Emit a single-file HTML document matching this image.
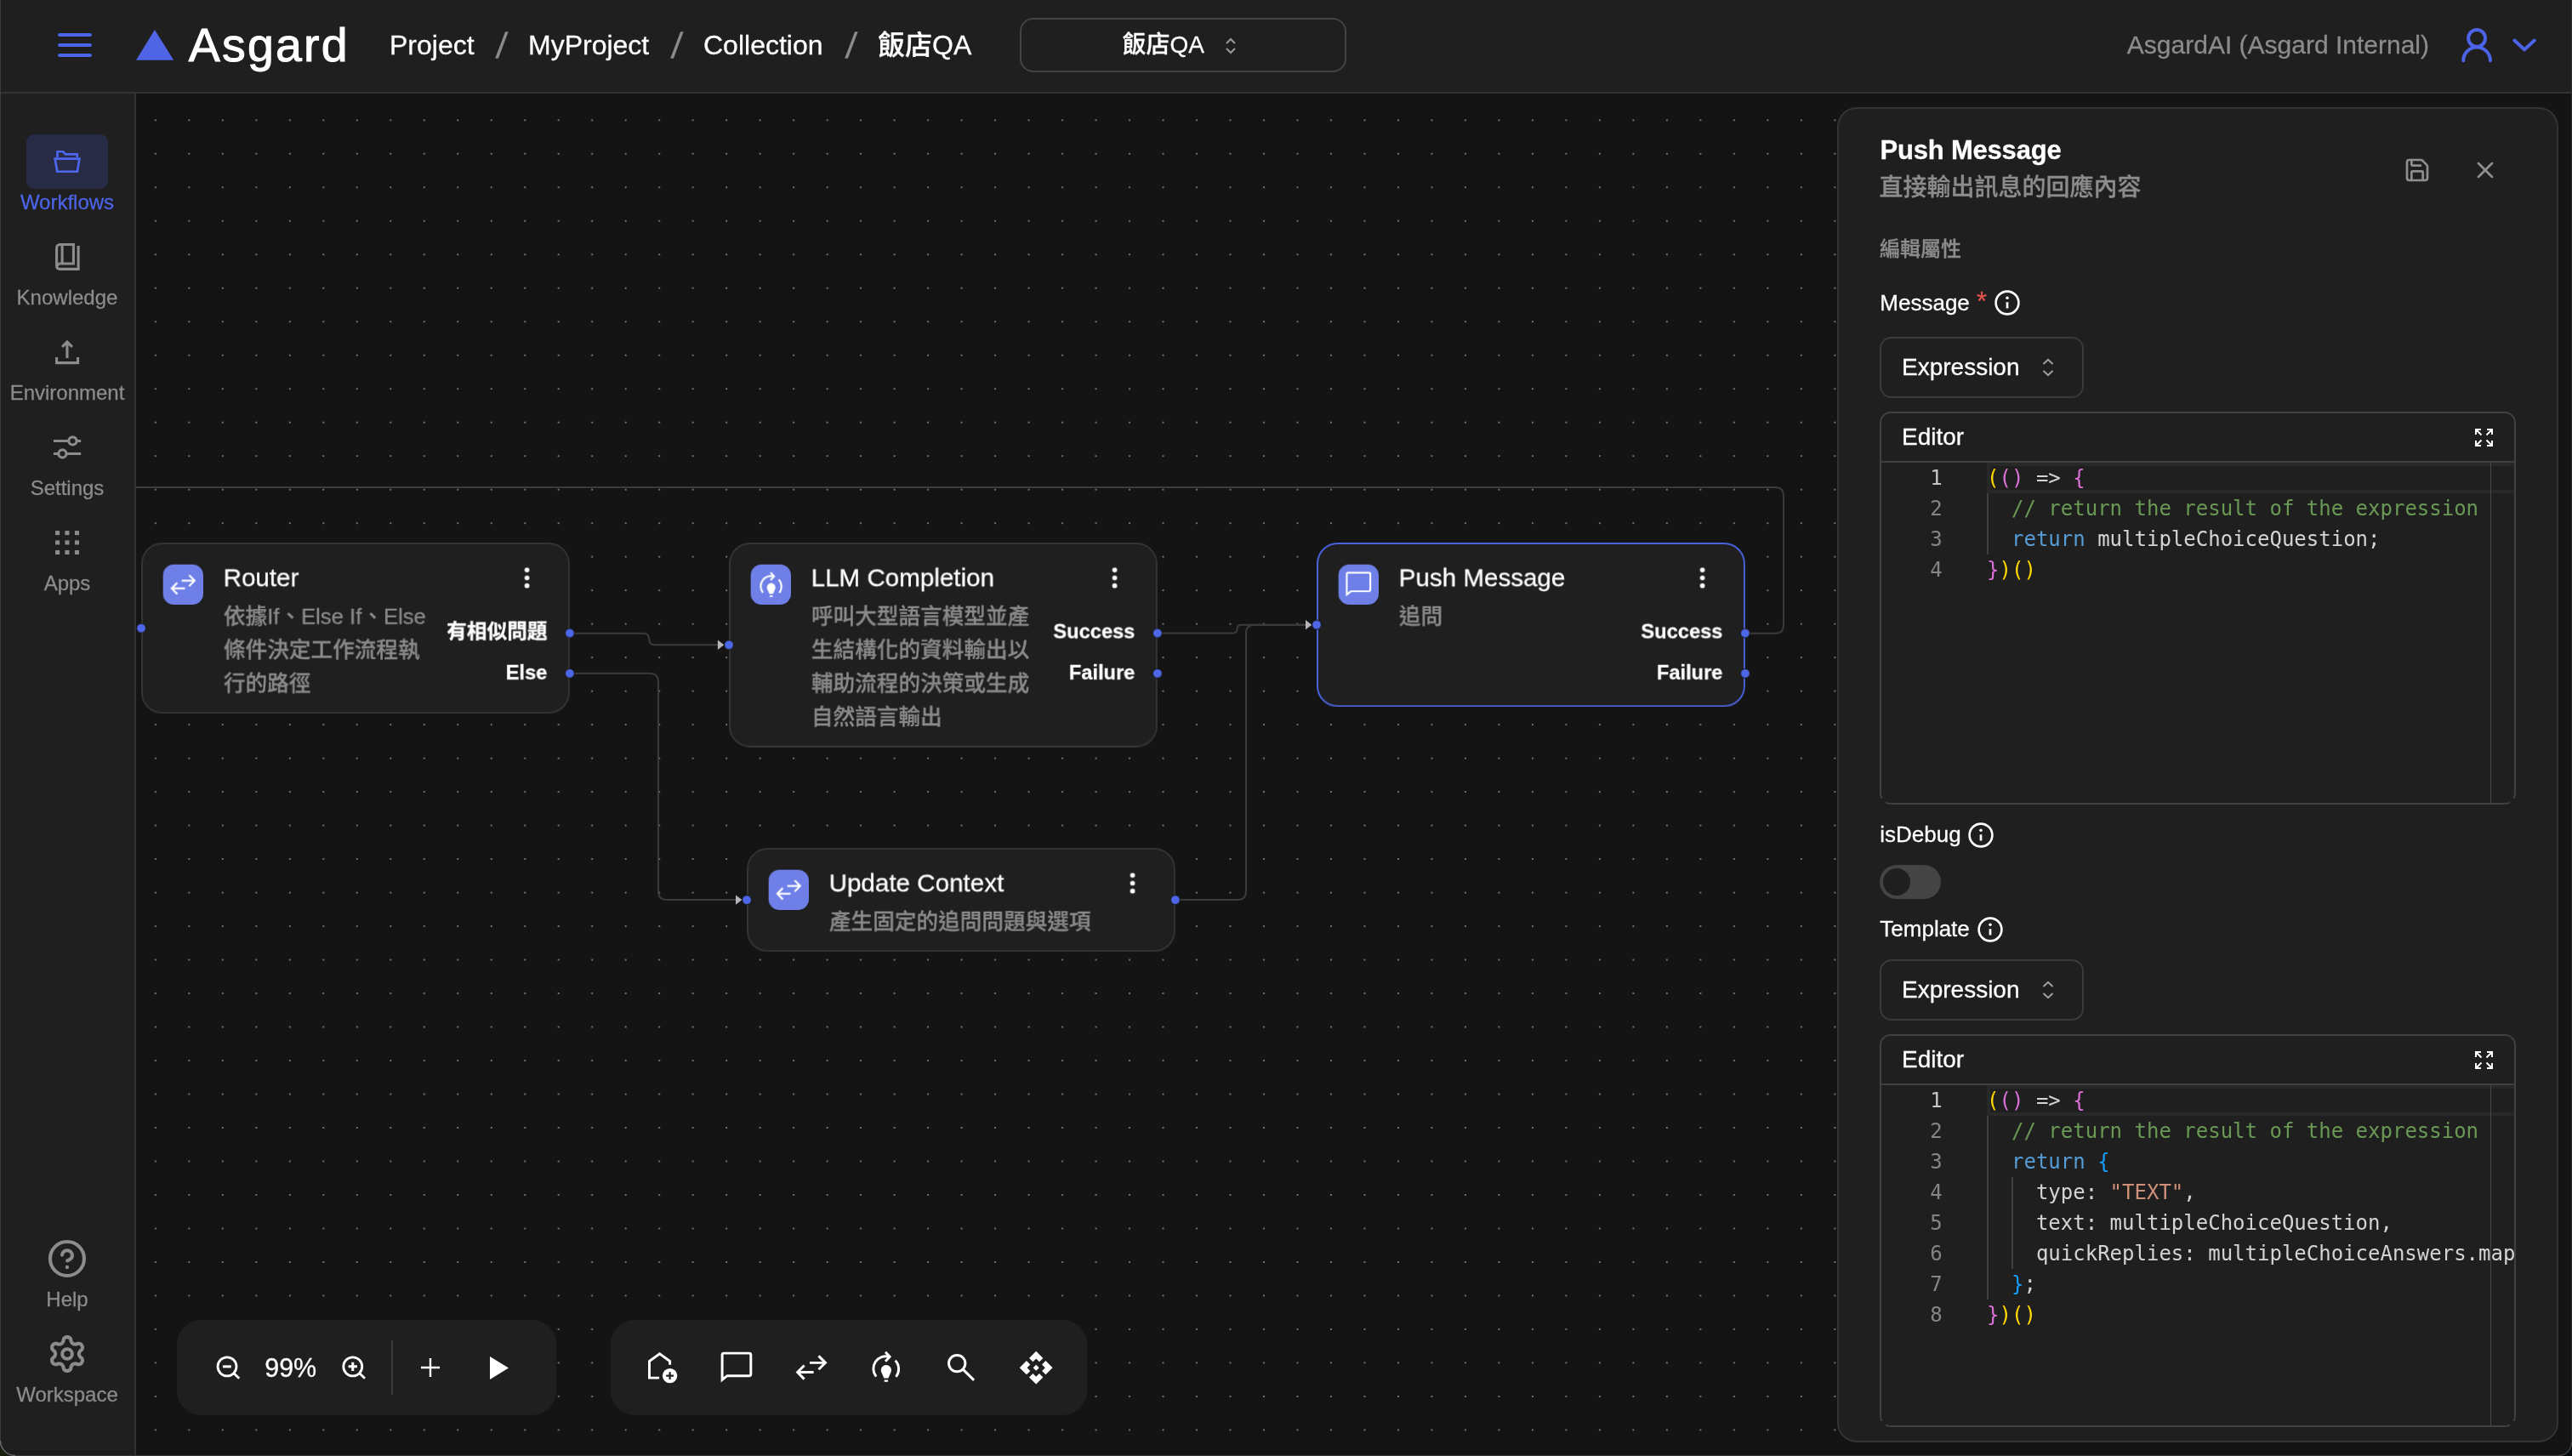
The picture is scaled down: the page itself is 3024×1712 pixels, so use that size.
<!DOCTYPE html>
<html lang="zh-Hant">
<head>
<meta charset="utf-8">
<title>Asgard - 飯店QA</title>
<style>
*{box-sizing:border-box;margin:0;padding:0}
html,body{width:3024px;height:1712px;background:#141414}
#root{position:absolute;left:0;top:0;width:3024px;height:1712px;overflow:hidden;background:#141414}
body{font-family:"Liberation Sans","Noto Sans CJK TC",sans-serif;color:#fff;position:relative;-webkit-font-smoothing:antialiased;-webkit-text-stroke-width:.28px}
.abs{position:absolute}
svg{display:block;overflow:visible}

/* ---------- header ---------- */
#header{will-change:transform;position:absolute;left:0;top:0;width:3024px;height:110px;background:#1f1f1f;border-bottom:2px solid #333;z-index:5}
#header .t{position:absolute;white-space:nowrap;font-size:32px;line-height:40px;top:33px;color:#fff;font-weight:500}
#header .sep{color:#8c8c8c;font-size:42px;top:33.65px;width:11.7px;transform:skewX(-6deg)}
#brand{position:absolute;left:221.8px;top:21.2px;font-size:55.5px;line-height:64px;letter-spacing:2.2px;color:#fff;white-space:nowrap;-webkit-text-stroke:1px #fff}
#projsel{position:absolute;left:1199px;top:21px;width:384px;height:64px;border:2px solid #444;border-radius:16px}
#org{position:absolute;right:168px;top:33px;font-size:30px;line-height:40px;color:#8c8c8c;white-space:nowrap}

/* ---------- sidebar ---------- */
#sidebar{will-change:transform;position:absolute;left:0;top:110px;width:160px;height:1602px;background:#1f1f1f;border-right:2px solid #333;z-index:4}
.nav{position:absolute;left:0;width:158px;height:96px;text-align:center;color:#8c8c8c}
.nav .ib{position:absolute;left:31px;top:0;width:96px;height:64px;border-radius:9px}
.nav .lb{position:absolute;left:-20px;width:198px;top:64px;font-size:24px;line-height:32px;text-align:center;white-space:nowrap}
.nav.on{color:#4c64e8}
.nav.on .ib{background:#272b45}
.nav svg{position:absolute}

/* ---------- canvas ---------- */
#canvas{position:absolute;left:160px;top:110px;width:2864px;height:1602px;background-color:#141414;overflow:hidden}
#edges{position:absolute;left:-160px;top:-110px;width:3024px;height:1712px}
.node{will-change:transform;position:absolute;width:510.5px;background:#1f1f1f;border:2px solid #343434;border-radius:25px;transform:scale(.986);transform-origin:0 0}
.node.sel{border-color:#4a62dc;border-width:2.4px}
.node .ic{position:absolute;left:24px;top:24px;width:48px;height:48px;border-radius:13px;background:#6e80e8}
.node .tt{position:absolute;left:96px;top:19.6px;font-size:30px;line-height:40px;white-space:nowrap;color:#fff}
.node .ds{position:absolute;left:96.3px;top:65.6px;font-size:26px;line-height:40px;color:#8a8a8a;font-weight:500}
.node .ol{position:absolute;right:24.3px;font-size:24px;line-height:32px;font-weight:700;white-space:nowrap;color:#fff}
.node .kb{position:absolute;right:45.6px;top:25.8px;width:6px;height:28px}
.hd{position:absolute;width:12px;height:12px;border-radius:50%;background:#4d67e8;border:1.8px solid #171717}

.tool{will-change:transform;position:absolute;top:1442px;height:112px;background:#1f1f1f;border-radius:28px}

/* ---------- panel ---------- */
#panel{will-change:transform;position:absolute;left:2160px;top:126px;width:848px;height:1570px;background:#1f1f1f;border:2px solid #333;border-radius:23px;z-index:3}
#panel .h1{position:absolute;left:48.5px;top:28.5px;font-size:31px;line-height:40px;font-weight:700;white-space:nowrap;letter-spacing:-.2px}
#panel .h2{position:absolute;left:47.6px;top:73.2px;font-size:28px;line-height:40px;color:#8c8c8c;white-space:nowrap;font-weight:500}
#panel .sec{position:absolute;left:48px;font-size:24px;line-height:32px;color:#8c8c8c;white-space:nowrap}
#panel .lab{position:absolute;left:48.3px;font-size:26px;line-height:32px;color:#fff;white-space:nowrap}
.sel2{position:absolute;left:48px;width:240px;height:72px;border:2px solid #3a3a3a;border-radius:14px}
.sel2 span{position:absolute;left:24px;top:14px;font-size:28px;line-height:40px}
.ed{position:absolute;left:48px;width:748px;height:462px;border:2px solid #404040;border-radius:13px}
.ed .cv{position:absolute;bottom:-2px;width:7px;height:7px;background:#1f1f1f}
.ed .eh{position:absolute;left:0;top:0;width:100%;height:58px;border-bottom:2px solid #404040}
.ed .eh span{position:absolute;left:24px;top:8px;font-size:28px;line-height:40px}
.ed .code{-webkit-text-stroke-width:0;overflow:hidden;position:absolute;left:0;top:58px;width:100%;height:400px;font-family:"DejaVu Sans Mono","Liberation Mono",monospace;font-size:24px;line-height:36px;color:#d4d4d4}
.ed .ln{position:absolute;left:0;width:71.7px;text-align:right;color:#858585;white-space:pre}
.ed .ln.cur{color:#c6c6c6}
.ed .cl{position:absolute;left:124.1px;white-space:pre}
.ed .ruler{position:absolute;left:716px;top:0;width:1px;height:400px;background:#484848}
.ed .curline{position:absolute;left:124px;right:-8px;top:0;height:36px;border:4px solid #282828}
.ed .guide{position:absolute;width:2px;background:#404040}
.cy{color:#ffd700}.cm{color:#da70d6}.cb{color:#179fff}.ck{color:#569cd6}.cc{color:#6a9955}.cs{color:#ce9178}
</style>
</head>
<body>
<div id="root">

<!-- ================= HEADER ================= -->
<div id="header">
  <svg class="abs" style="left:68px;top:39px" width="40" height="28" viewBox="0 0 40 28"><g stroke="#4c64e8" stroke-width="4" stroke-linecap="round"><path d="M2 2H38M2 14H38M2 26H38"/></g></svg>
  <svg class="abs" style="left:160px;top:35.2px" width="44.2" height="35.8" viewBox="0 0 44.2 35.8"><path d="M21.9 0L44.2 35.8H0Z" fill="#4f65e6"/></svg>
  <div id="brand">Asgard</div>
  <div class="t" style="left:458px">Project</div>
  <div class="t sep" style="left:584.25px">/</div>
  <div class="t" style="left:621px">MyProject</div>
  <div class="t sep" style="left:790.05px">/</div>
  <div class="t" style="left:827px">Collection</div>
  <div class="t sep" style="left:995.1px">/</div>
  <div class="t" style="left:1032px">飯店QA</div>
  <div id="projsel">
    <div class="t" style="left:118.4px;top:10.3px;font-size:28px">飯店QA</div>
    <svg class="abs" style="left:239px;top:20.5px" width="14" height="20" viewBox="0 0 14 20"><path d="M2 7L7 2L12 7M2 13L7 18L12 13" fill="none" stroke="#9a9a9a" stroke-width="2"/></svg>
  </div>
  <div id="org">AsgardAI (Asgard Internal)</div>
  <svg class="abs" style="left:2892px;top:31px" width="40" height="44" viewBox="0 0 40 44"><g fill="none" stroke="#4c64e8" stroke-width="4" stroke-linecap="round"><circle cx="20.1" cy="14" r="9.95"/><path d="M4.3 40.3A15.8 15.8 0 0 1 35.9 40.3"/></g></svg>
  <svg class="abs" style="left:2953px;top:44px" width="30" height="18" viewBox="0 0 30 18"><path d="M3.4 3.5L15.1 14.4L26.8 3.5" fill="none" stroke="#4c64e8" stroke-width="4" stroke-linecap="round" stroke-linejoin="round"/></svg>
</div>

<!-- ================= SIDEBAR ================= -->
<div id="sidebar">
  <div class="nav on" style="top:48px"><div class="ib"><svg class="abs" style="left:0;top:0" width="96" height="64" viewBox="0 0 96 64" fill="none" stroke="#4d67ec" stroke-width="2.7"><path d="M36.45 27V20.25H43.2L45.9 23.35H59.7V27"/><path d="M33.6 28.6H62.4L59.9 43.75H36.3Z"/></svg></div><div class="lb">Workflows</div></div>
  <div class="nav" style="top:160px"><div class="ib"><svg class="abs" style="left:0;top:0" width="96" height="64" viewBox="0 0 96 64" fill="none" stroke="#8c8c8c" stroke-width="3.1"><path d="M39.6 40H55.4V17.5H39.6A4 4 0 0 0 35.6 21.5V42.9A3.5 3.5 0 0 0 39.1 46.4H61.1V18.9"/><path d="M39.8 40A3.2 3.2 0 0 0 36.3 43.2"/><path d="M42.1 17.5V40"/></svg></div><div class="lb">Knowledge</div></div>
  <div class="nav" style="top:272px"><div class="ib"><svg class="abs" style="left:0;top:0" width="96" height="64" viewBox="0 0 96 64" fill="none" stroke="#8c8c8c" stroke-width="3.1"><path d="M35.6 38.05V44.6H60.56V38.05M47.95 20.3V38.9M42.1 25.9L47.95 20.05L53.85 25.9"/></svg></div><div class="lb">Environment</div></div>
  <div class="nav" style="top:384px"><div class="ib"><svg class="abs" style="left:0;top:0" width="96" height="64" viewBox="0 0 96 64" fill="none" stroke="#8c8c8c" stroke-width="3.1"><path d="M31.9 24.46H49.86M59.06 24.46H64.15M31.9 39.5H37.8M47 39.5H64.15"/><circle cx="54.46" cy="24.46" r="4.6"/><circle cx="42.4" cy="39.5" r="4.6"/></svg></div><div class="lb">Settings</div></div>
  <div class="nav" style="top:496px"><div class="ib"><svg class="abs" style="left:0;top:0" width="96" height="64" viewBox="0 0 96 64" fill="#8c8c8c"><rect x="34.07" y="18.07" width="5.05" height="5.05"/><rect x="45.4" y="18.07" width="5.05" height="5.05"/><rect x="56.94" y="18.07" width="5.05" height="5.05"/><rect x="34.07" y="29.4" width="5.05" height="5.05"/><rect x="45.4" y="29.4" width="5.05" height="5.05"/><rect x="56.94" y="29.4" width="5.05" height="5.05"/><rect x="34.07" y="40.94" width="5.05" height="5.05"/><rect x="45.4" y="40.94" width="5.05" height="5.05"/><rect x="56.94" y="40.94" width="5.05" height="5.05"/></svg></div><div class="lb">Apps</div></div>
  <div class="nav" style="top:1338px"><div class="ib"><svg class="abs" style="left:0;top:0" width="96" height="64" viewBox="0 0 96 64" fill="none" stroke="#8c8c8c" stroke-width="4.1" stroke-linecap="round"><circle cx="47.95" cy="32" r="20"/><path d="M41.95 27.6A6 6 0 1 1 53.15 31.2Q51.2 33.3 48.2 34.3"/><circle cx="47.95" cy="42" r="2.2" fill="#8c8c8c" stroke="none"/></svg></div><div class="lb">Help</div></div>
  <div class="nav" style="top:1450px"><div class="ib"><svg class="abs" style="left:0;top:0" width="96" height="64" viewBox="0 0 96 64" fill="none" stroke="#8c8c8c" stroke-width="4.1" stroke-linejoin="round"><path d="M61.85,32.00 L61.88,32.48 L61.98,32.98 L62.14,33.49 L62.36,34.02 L62.66,34.59 L63.06,35.20 L63.63,35.90 L65.00,36.88 L65.51,37.69 L65.77,38.47 L65.89,39.23 L65.89,39.97 L65.79,40.67 L65.58,41.35 L65.28,41.97 L64.88,42.55 L64.41,43.07 L63.85,43.51 L63.21,43.88 L62.49,44.16 L61.68,44.32 L60.72,44.29 L59.19,43.59 L58.30,43.44 L57.57,43.40 L56.93,43.43 L56.35,43.50 L55.83,43.62 L55.36,43.78 L54.92,43.99 L54.52,44.26 L54.14,44.59 L53.78,44.99 L53.43,45.45 L53.09,45.99 L52.76,46.64 L52.44,47.49 L52.28,49.16 L51.83,50.01 L51.28,50.62 L50.69,51.11 L50.05,51.48 L49.38,51.74 L48.69,51.90 L48.00,51.95 L47.31,51.90 L46.62,51.74 L45.95,51.48 L45.31,51.11 L44.72,50.62 L44.17,50.01 L43.72,49.16 L43.56,47.49 L43.24,46.64 L42.91,45.99 L42.57,45.45 L42.22,44.99 L41.86,44.59 L41.48,44.26 L41.08,43.99 L40.64,43.78 L40.17,43.62 L39.65,43.50 L39.07,43.43 L38.43,43.40 L37.70,43.44 L36.81,43.59 L35.28,44.29 L34.32,44.32 L33.51,44.16 L32.79,43.88 L32.15,43.51 L31.59,43.07 L31.12,42.55 L30.72,41.97 L30.42,41.35 L30.21,40.67 L30.11,39.97 L30.11,39.23 L30.23,38.47 L30.49,37.69 L31.00,36.88 L32.37,35.90 L32.94,35.20 L33.34,34.59 L33.64,34.02 L33.86,33.49 L34.02,32.98 L34.12,32.48 L34.15,32.00 L34.12,31.52 L34.02,31.02 L33.86,30.51 L33.64,29.98 L33.34,29.41 L32.94,28.80 L32.37,28.10 L31.00,27.12 L30.49,26.31 L30.23,25.53 L30.11,24.77 L30.11,24.03 L30.21,23.33 L30.42,22.65 L30.72,22.02 L31.12,21.45 L31.59,20.93 L32.15,20.49 L32.79,20.12 L33.51,19.84 L34.32,19.68 L35.28,19.71 L36.81,20.41 L37.70,20.56 L38.43,20.60 L39.07,20.57 L39.65,20.50 L40.17,20.38 L40.64,20.22 L41.07,20.01 L41.48,19.74 L41.86,19.41 L42.22,19.01 L42.57,18.55 L42.91,18.01 L43.24,17.36 L43.56,16.51 L43.72,14.84 L44.17,13.99 L44.72,13.38 L45.31,12.89 L45.95,12.52 L46.62,12.26 L47.31,12.10 L48.00,12.05 L48.69,12.10 L49.38,12.26 L50.05,12.52 L50.69,12.89 L51.28,13.38 L51.83,13.99 L52.28,14.84 L52.44,16.51 L52.76,17.36 L53.09,18.01 L53.43,18.55 L53.78,19.01 L54.14,19.41 L54.52,19.74 L54.92,20.01 L55.36,20.22 L55.83,20.38 L56.35,20.50 L56.93,20.57 L57.57,20.60 L58.30,20.56 L59.19,20.41 L60.72,19.71 L61.68,19.68 L62.49,19.84 L63.21,20.12 L63.85,20.49 L64.41,20.93 L64.88,21.45 L65.28,22.02 L65.58,22.65 L65.79,23.33 L65.89,24.03 L65.89,24.77 L65.77,25.53 L65.51,26.31 L65.00,27.12 L63.63,28.10 L63.06,28.80 L62.66,29.41 L62.36,29.98 L62.14,30.51 L61.98,31.02 L61.88,31.52Z"/><circle cx="48" cy="32" r="5.8"/></svg></div><div class="lb">Workspace</div></div>
</div>

<!-- ================= CANVAS ================= -->
<div id="canvas">

  <svg id="edges" viewBox="0 0 3024 1712" fill="none" stroke="#3b3b3b" stroke-width="2">
    <defs><pattern id="dots" x="163.095" y="121.555" width="39.49" height="39.49" patternUnits="userSpaceOnUse"><circle cx="19.745" cy="19.745" r="1.1" fill="#858585" stroke="none"/></pattern></defs>
    <rect x="160" y="110" width="2855" height="1602" fill="url(#dots)" stroke="none"/>
    <path d="M669.6 744.65H756.3Q763.1 744.65 763.1 751.45Q763.1 758.25 769.9 758.25H845"/>
    <path d="M669.6 791.85H763.95Q773.95 791.85 773.95 801.85V1048.1Q773.95 1058.1 783.95 1058.1H866"/>
    <path d="M1360.7 744.5H1449.5Q1454.5 744.5 1454.5 739.55Q1454.5 734.65 1459.5 734.65H1536"/>
    <path d="M1381.1 1057.9H1455Q1465 1057.9 1465 1047.9V744.65Q1465 734.65 1475 734.65H1536"/>
    <path d="M2051.6 744.65H2086.95Q2096.95 744.65 2096.95 734.65V582.9Q2096.95 572.9 2086.95 572.9H100"/>
    <g fill="#b4b4b9" stroke="none">
      <path d="M843.9 752.6L851.3 758.25L843.9 763.9Z"/>
      <path d="M865 1052.45L872.4 1058.1L865 1063.75Z"/>
      <path d="M1535 729L1542.4 734.65L1535 740.3Z"/>
    </g>
  </svg>

  <!-- Router -->
  <div class="node" style="left:6.3px;top:528.3px;height:204px">
    <div class="ic"><svg class="abs" style="left:0;top:0" width="48" height="48" viewBox="-24 -24 48 48" fill="none" stroke="#fff"><g transform="scale(.8333)" stroke-width="2.6"><path d="M-2 -5.65H15.8M8.5 -13.6L16.45 -5.65L8.5 2.3M2.6 5.55H-15.7M-8.4 -2.55L-16.35 5.55L-8.4 13.65"/></g></svg></div>
    <div class="tt">Router</div>
    <div class="ds" style="width:250px">依據If、Else If、Else條件決定工作流程執行的路徑</div>
    <svg class="kb" viewBox="0 0 6 28"><g fill="#fff"><circle cx="3" cy="4.6" r="2.85"/><circle cx="3" cy="14" r="2.85"/><circle cx="3" cy="23.4" r="2.85"/></g></svg>
    <div class="ol" style="top:88.2px">有相似問題</div>
    <div class="ol" style="top:136.8px">Else</div>
    <div class="hd" style="left:-8px;top:94px"></div>
    <div class="hd" style="right:-8px;top:100px"></div>
    <div class="hd" style="right:-8px;top:148px"></div>
  </div>

  <!-- LLM Completion -->
  <div class="node" style="left:697.4px;top:528.3px;height:244px">
    <div class="ic"><svg class="abs" style="left:0;top:0" width="48" height="48" viewBox="-24 -24 48 48" fill="none" stroke="#fff"><g transform="translate(.5 .9) scale(.8333)" stroke-width="2.6"><path d="M-11.84 10.65A14.7 14.7 0 0 1 3.6 -12.75M-1 -18.3L4.1 -12.8L-1 -7.3M10.65 -8.23A14.7 14.7 0 0 1 11.48 10.85"/><path d="M-0.1 -3.04a6.1 6.1 0 0 1 5.5 8.75L2.4 12.4H-2.6L-5.6 5.7a6.1 6.1 0 0 1 5.5 -8.74ZM-2.3 14.6H2.1V16.7H-2.3Z" fill="#fff" stroke="none"/></g></svg></div>
    <div class="tt">LLM Completion</div>
    <div class="ds" style="width:266px">呼叫大型語言模型並產生結構化的資料輸出以輔助流程的決策或生成自然語言輸出</div>
    <svg class="kb" viewBox="0 0 6 28"><g fill="#fff"><circle cx="3" cy="4.6" r="2.85"/><circle cx="3" cy="14" r="2.85"/><circle cx="3" cy="23.4" r="2.85"/></g></svg>
    <div class="ol" style="top:88.2px">Success</div>
    <div class="ol" style="top:136.8px">Failure</div>
    <div class="hd" style="left:-8px;top:114px"></div>
    <div class="hd" style="right:-8px;top:100px"></div>
    <div class="hd" style="right:-8px;top:148px"></div>
  </div>

  <!-- Push Message -->
  <div class="node sel" style="left:1387.7px;top:528.3px;height:196px">
    <div class="ic"><svg class="abs" style="left:0;top:0" width="48" height="48" viewBox="-24 -24 48 48" fill="none" stroke="#fff"><g transform="scale(.8333)" stroke-width="2.6"><path d="M-16.9 14.4V-14.9a2 2 0 0 1 2-2H14.8a2 2 0 0 1 2 2V7.65a2 2 0 0 1-2 2H-11Z"/></g></svg></div>
    <div class="tt">Push Message</div>
    <div class="ds" style="width:240px">追問</div>
    <svg class="kb" viewBox="0 0 6 28"><g fill="#fff"><circle cx="3" cy="4.6" r="2.85"/><circle cx="3" cy="14" r="2.85"/><circle cx="3" cy="23.4" r="2.85"/></g></svg>
    <div class="ol" style="top:88.2px">Success</div>
    <div class="ol" style="top:136.8px">Failure</div>
    <div class="hd" style="left:-8px;top:90px"></div>
    <div class="hd" style="right:-8px;top:100px"></div>
    <div class="hd" style="right:-8px;top:148px"></div>
  </div>

  <!-- Update Context -->
  <div class="node" style="left:718.3px;top:887px;height:124px">
    <div class="ic"><svg class="abs" style="left:0;top:0" width="48" height="48" viewBox="-24 -24 48 48" fill="none" stroke="#fff"><g transform="scale(.8333)" stroke-width="2.6"><path d="M-2 -5.65H15.8M8.5 -13.6L16.45 -5.65L8.5 2.3M2.6 5.55H-15.7M-8.4 -2.55L-16.35 5.55L-8.4 13.65"/></g></svg></div>
    <div class="tt">Update Context</div>
    <div class="ds" style="width:340px;white-space:nowrap">產生固定的追問問題與選項</div>
    <svg class="kb" viewBox="0 0 6 28"><g fill="#fff"><circle cx="3" cy="4.6" r="2.85"/><circle cx="3" cy="14" r="2.85"/><circle cx="3" cy="23.4" r="2.85"/></g></svg>
    <div class="hd" style="left:-8px;top:54px"></div>
    <div class="hd" style="right:-8px;top:54px"></div>
  </div>
  <div class="tool" style="left:48px;width:446px">
    <svg class="abs" style="left:46px;top:42px" width="30" height="30" viewBox="0 0 30 30" fill="none" stroke="#fff" stroke-width="2.8"><circle cx="13" cy="12.86" r="11"/><path d="M20.9 20.8L27.2 26.8"/><path d="M7.9 12.86H17.8" stroke-width="3"/></svg>
    <div class="abs" style="left:103.2px;top:35.9px;font-size:30.5px;line-height:40px;white-space:nowrap">99%</div>
    <svg class="abs" style="left:194px;top:42px" width="30" height="30" viewBox="0 0 30 30" fill="none" stroke="#fff" stroke-width="2.8"><circle cx="12.76" cy="12.86" r="11"/><path d="M20.66 20.8L26.96 26.8"/><path d="M7.6 12.86H17.9M12.76 7.7V18" stroke-width="3"/></svg>
    <div class="abs" style="left:252px;top:24px;width:2px;height:64px;background:#3a3a3a"></div>
    <svg class="abs" style="left:287px;top:45px" width="22" height="22" viewBox="0 0 22 22" fill="none" stroke="#fff" stroke-width="2.4"><path d="M11 0V22M0 11H22"/></svg>
    <svg class="abs" style="left:368px;top:43px" width="22" height="27" viewBox="0 0 22 27"><path d="M0 0L22 13.5L0 27Z" fill="#fff"/></svg>
  </div>
  <div class="tool" style="left:558px;width:560px">
    <svg class="abs" style="left:0;top:0" width="560" height="112" viewBox="0 0 560 112" fill="none" stroke="#fff" stroke-width="2.95">
      <g transform="translate(60 56)"><path d="M-2.9 12.1H-14.5V-7.5L-2.4 -16.2L9.6 -7.5V-3.2"/><circle cx="9.6" cy="9.6" r="8.7" fill="#fff" stroke="none"/><path d="M5.2 9.6H14M9.6 5.2V14" stroke="#1f1f1f" stroke-width="2.2"/></g>
      <g transform="translate(148 56)"><path d="M-16.9 14.4V-14.9a2 2 0 0 1 2-2H14.8a2 2 0 0 1 2 2V7.65a2 2 0 0 1-2 2H-11Z"/></g>
      <g transform="translate(236 56)"><path d="M-2 -5.65H15.8M8.5 -13.6L16.45 -5.65L8.5 2.3M2.6 5.55H-15.7M-8.4 -2.55L-16.35 5.55L-8.4 13.65"/></g>
      <g transform="translate(324 56)"><path d="M-11.84 10.65A14.7 14.7 0 0 1 3.6 -12.75M-1 -18.3L4.1 -12.8L-1 -7.3M10.65 -8.23A14.7 14.7 0 0 1 11.48 10.85"/><path d="M-0.1 -3.04a6.1 6.1 0 0 1 5.5 8.75L2.4 12.4H-2.6L-5.6 5.7a6.1 6.1 0 0 1 5.5 -8.74ZM-2.3 14.6H2.1V16.7H-2.3Z" fill="#fff" stroke="none"/></g>
      <g transform="translate(412 56)"><circle cx="-4.8" cy="-4.9" r="9.7"/><path d="M2.2 2.1L15.1 14.9"/></g>
    </svg>
    <svg class="abs" style="left:478.8px;top:34.87px" width="42.4" height="42.4" viewBox="0 0 24 24" fill="#fff"><path d="M14 12l-2 2-2-2 2-2 2 2zm-2-6l2.12 2.12 2.5-2.5L12 1 7.38 5.62l2.5 2.5L12 6zm-6 6l2.12-2.12-2.5-2.5L1 12l4.62 4.62 2.5-2.5L6 12zm12 0l-2.12 2.12 2.5 2.5L23 12l-4.62-4.62-2.5 2.5L18 12zm-6 6l-2.12-2.12-2.5 2.5L12 23l4.62-4.62-2.5-2.5L12 18z"/></svg>
  </div>
</div>

<!-- ================= PANEL ================= -->
<div id="panel">
  <div class="h1">Push Message</div>
  <div class="h2">直接輸出訊息的回應內容</div>
  <svg class="abs" style="left:663.5px;top:55.8px" width="32" height="32" viewBox="0 0 24 24" fill="none" stroke="#8f8f8f" stroke-width="2" stroke-linecap="round" stroke-linejoin="round"><path d="M15.2 3a2 2 0 0 1 1.4.6l3.8 3.8a2 2 0 0 1 .6 1.4V19a2 2 0 0 1-2 2H5a2 2 0 0 1-2-2V5a2 2 0 0 1 2-2z"/><path d="M17 21v-7a1 1 0 0 0-1-1H8a1 1 0 0 0-1 1v7"/><path d="M7 3v4a1 1 0 0 0 1 1h7"/></svg>
  <svg class="abs" style="left:744.4px;top:56px" width="32" height="32" viewBox="0 0 24 24" fill="none" stroke="#8f8f8f" stroke-width="2" stroke-linecap="round" stroke-linejoin="round"><path d="M18 6 6 18"/><path d="m6 6 12 12"/></svg>
  <div class="sec" style="top:148.6px;font-weight:500">編輯屬性</div>
  <div class="lab" style="top:211.7px">Message <span style="color:#e5534f;font-size:31px;line-height:0;position:relative;top:.4px;left:1px">*</span></div>
  <svg class="abs" style="left:183px;top:213px" width="30" height="30" viewBox="0 0 30 30"><circle cx="15" cy="15" r="13.4" fill="none" stroke="#fff" stroke-width="2.6"/><rect x="13.65" y="14.3" width="2.7" height="7.2" fill="#fff"/><circle cx="15" cy="9.3" r="1.75" fill="#fff"/></svg>
  <div class="sel2" style="top:268px"><span>Expression</span><svg class="abs" style="left:189px;top:23.2px" width="14" height="22" viewBox="0 0 14 22"><path d="M1.5 7L7 1.8L12.5 7M1.5 15L7 20.2L12.5 15" fill="none" stroke="#a0a0a0" stroke-width="2"/></svg></div>
  <div class="ed" style="top:356px">
    <div class="eh"><span>Editor</span><svg class="abs" style="left:698px;top:18px" width="21" height="21" viewBox="0 0 21 21" fill="none" stroke="#fff" stroke-width="2"><path d="M1 7V1H7M1.5 1.5L7.5 7.5M14 1H20V7M19.5 1.5L13.5 7.5M1 14V20H7M1.5 19.5L7.5 13.5M20 14V20H14M19.5 19.5L13.5 13.5"/></svg></div>
    <div class="code">
      <div class="curline"></div>
      <div class="guide" style="left:124px;top:36px;height:72px"></div>
      <div class="ln cur" style="top:0px">1</div><div class="cl" style="top:0px"><span class="cy">(</span><span class="cm">()</span> =&gt; <span class="cm">{</span></div>
      <div class="ln" style="top:36px">2</div><div class="cl" style="top:36px">  <span class="cc">// return the result of the expression</span></div>
      <div class="ln" style="top:72px">3</div><div class="cl" style="top:72px">  <span class="ck">return</span> multipleChoiceQuestion;</div>
      <div class="ln" style="top:108px">4</div><div class="cl" style="top:108px"><span class="cm">}</span><span class="cy">)()</span></div>
      <div class="ruler"></div>
    </div>
    <div class="cv" style="left:-2px"></div><div class="cv" style="right:-2px"></div>
  </div>

  <div class="lab" style="top:837px">isDebug</div>
  <svg class="abs" style="left:152px;top:839px" width="30" height="30" viewBox="0 0 30 30"><circle cx="15" cy="15" r="13.4" fill="none" stroke="#fff" stroke-width="2.6"/><rect x="13.65" y="14.3" width="2.7" height="7.2" fill="#fff"/><circle cx="15" cy="9.3" r="1.75" fill="#fff"/></svg>
  <div class="abs" style="left:48px;top:889px;width:72px;height:40px;border-radius:20px;background:#444"><div class="abs" style="left:4px;top:4px;width:32px;height:32px;border-radius:50%;background:#1f1f1f"></div></div>
  <div class="lab" style="top:948px">Template</div>
  <svg class="abs" style="left:163px;top:950px" width="30" height="30" viewBox="0 0 30 30"><circle cx="15" cy="15" r="13.4" fill="none" stroke="#fff" stroke-width="2.6"/><rect x="13.65" y="14.3" width="2.7" height="7.2" fill="#fff"/><circle cx="15" cy="9.3" r="1.75" fill="#fff"/></svg>
  <div class="sel2" style="top:1000px"><span>Expression</span><svg class="abs" style="left:189px;top:23.2px" width="14" height="22" viewBox="0 0 14 22"><path d="M1.5 7L7 1.8L12.5 7M1.5 15L7 20.2L12.5 15" fill="none" stroke="#a0a0a0" stroke-width="2"/></svg></div>
  <div class="ed" style="top:1088px">
    <div class="eh"><span>Editor</span><svg class="abs" style="left:698px;top:18px" width="21" height="21" viewBox="0 0 21 21" fill="none" stroke="#fff" stroke-width="2"><path d="M1 7V1H7M1.5 1.5L7.5 7.5M14 1H20V7M19.5 1.5L13.5 7.5M1 14V20H7M1.5 19.5L7.5 13.5M20 14V20H14M19.5 19.5L13.5 13.5"/></svg></div>
    <div class="code">
      <div class="curline"></div>
      <div class="guide" style="left:124px;top:36px;height:216px"></div>
      <div class="guide" style="left:152.9px;top:108px;height:108px"></div>
      <div class="ln cur" style="top:0px">1</div><div class="cl" style="top:0px"><span class="cy">(</span><span class="cm">()</span> =&gt; <span class="cm">{</span></div>
      <div class="ln" style="top:36px">2</div><div class="cl" style="top:36px">  <span class="cc">// return the result of the expression</span></div>
      <div class="ln" style="top:72px">3</div><div class="cl" style="top:72px">  <span class="ck">return</span> <span class="cb">{</span></div>
      <div class="ln" style="top:108px">4</div><div class="cl" style="top:108px">    type: <span class="cs">"TEXT"</span>,</div>
      <div class="ln" style="top:144px">5</div><div class="cl" style="top:144px">    text: multipleChoiceQuestion,</div>
      <div class="ln" style="top:180px">6</div><div class="cl" style="top:180px">    quickReplies: multipleChoiceAnswers.map</div>
      <div class="ln" style="top:216px">7</div><div class="cl" style="top:216px">  <span class="cb">}</span>;</div>
      <div class="ln" style="top:252px">8</div><div class="cl" style="top:252px"><span class="cm">}</span><span class="cy">)()</span></div>
      <div class="ruler"></div>
    </div>
    <div class="cv" style="left:-2px"></div><div class="cv" style="right:-2px"></div>
  </div>

</div>

<!-- window frame (macOS window edge / rounded bottom corners) -->
<svg class="abs" style="left:0;top:0;z-index:9;pointer-events:none" width="3024" height="1712" viewBox="0 0 3024 1712">
  <rect x="0" y="0" width="1" height="1712" fill="#3c3c3c"/>
  <rect x="3023" y="0" width="1" height="1712" fill="#2a2a2a"/>
  <rect x="0" y="1711" width="3024" height="1" fill="#3a3a3a"/>
  <path d="M0 1694V1712H18A18 18 0 0 1 0 1694Z" fill="#18220f"/>
  <path d="M0.5 1694A17.5 17.5 0 0 0 18 1711.5" fill="none" stroke="#6a6c70" stroke-width="1.4"/>
  <path d="M3024 1696V1712H3008A16 16 0 0 0 3024 1696Z" fill="#070b0d"/>
  <path d="M3023.5 1696A15.5 15.5 0 0 1 3008 1711.5" fill="none" stroke="#484848" stroke-width="1.2"/>
</svg>

</div>
</body>
</html>
